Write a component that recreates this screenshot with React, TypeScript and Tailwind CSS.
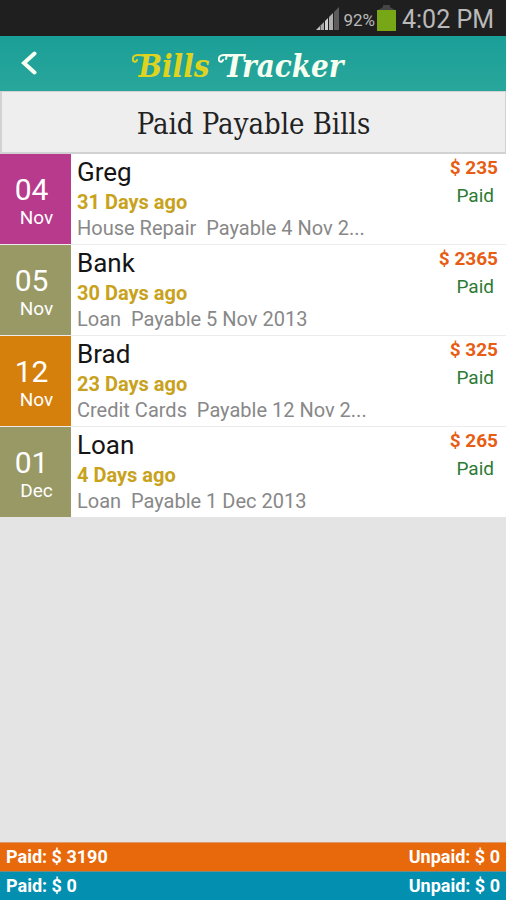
import clsx from 'clsx'

type Bill = {
  day: string
  month: string
  name: string
  age: string
  summary: string
  amount: string
  color: string
}

const bills: Bill[] = [
  { day: '04', month: 'Nov', name: 'Greg', age: '31 Days ago', summary: 'House Repair  Payable 4 Nov 2...', amount: '$ 235', color: 'bg-[#b83a8c]' },
  { day: '05', month: 'Nov', name: 'Bank', age: '30 Days ago', summary: 'Loan  Payable 5 Nov 2013', amount: '$ 2365', color: 'bg-[#999966]' },
  { day: '12', month: 'Nov', name: 'Brad', age: '23 Days ago', summary: 'Credit Cards  Payable 12 Nov 2...', amount: '$ 325', color: 'bg-[#d5800c]' },
  { day: '01', month: 'Dec', name: 'Loan', age: '4 Days ago', summary: 'Loan  Payable 1 Dec 2013', amount: '$ 265', color: 'bg-[#999966]' },
]

function StatusBar() {
  return (
    <div className="flex h-9 items-center justify-end bg-[#1f1f1f] pr-3 text-[#b9b9b9]">
      {/* Signal strength */}
      <svg width="23" height="23" viewBox="0 0 23 23" className="mr-1">
        <path d="M0 23 4 19V23Z" fill="#c4c4c4" />
        <path d="M4.500 23V18.500L8 15V23Z" fill="#a8a8a8" />
        <path d="M9 23V14L12 11V23Z" fill="#d0d0d0" />
        <path d="M13 23V10L17 6V23Z" fill="#b0b0b0" />
        <path d="M18 23V5L23 0V23Z" fill="#5c5c5c" />
      </svg>
      <span className="pt-1 text-[17px] leading-8">92%</span>
      {/* Battery */}
      <svg width="19" height="26" viewBox="0 0 19 26" className="mr-1.5 ml-0.5">
        <path d="M6 0H13V2L18 5H1L6 2Z" fill="#454545" />
        <rect y="5" width="19" height="21" fill="#77a617" />
      </svg>
      <span className="pt-1 text-[25px] leading-8">4:02 PM</span>
    </div>
  )
}

/* Small flourish that leads into a word of the logo */
function Flourish() {
  return (
    <svg width="14" height="11" viewBox="0 0 14 11" fill="none" stroke="currentColor" strokeWidth="2" strokeLinecap="round" className="absolute top-2 -left-1.5">
      <path d="M13 2C9 1 2 0 1 4C0 8 4 9 5 6" />
    </svg>
  )
}

function Header() {
  return (
    <header className="relative flex h-[55px] items-center justify-center bg-linear-to-b from-[#1a9f98] to-[#28a69b]">
      <button aria-label="Back" className="absolute top-0 left-0 flex h-full items-center px-5">
        <svg width="18" height="26" viewBox="0 0 18 26" fill="none" stroke="#f6fff0" strokeWidth="4">
          <path d="M14.500 2.500 4 12 14.500 21.500" strokeLinecap="round" />
        </svg>
      </button>
      <div className="flex items-center gap-3.5 pt-1 pr-6 font-['DejaVu_Serif_Condensed','DejaVu_Serif',serif] text-[31px] leading-10 font-bold italic">
        <span className="relative text-[#ded321]">
          <Flourish />
          Bills
        </span>
        <span className="relative text-[#f6fff0]">
          <Flourish />
          Tracker
        </span>
      </div>
    </header>
  )
}

function BillRow({ bill }: { bill: Bill }) {
  return (
    <li className="flex">
      <div className={clsx('flex h-[90px] w-[71px] shrink-0 flex-col pt-5 text-center text-white', bill.color)}>
        <span className="pr-2 text-[30px] leading-8">{bill.day}</span>
        <span className="pl-0.5 text-[19px] leading-6">{bill.month}</span>
      </div>
      <div className="min-w-0 pl-1.5">
        <h2 className="text-[26px] leading-9 text-[#151515]">{bill.name}</h2>
        <p className="text-xl leading-6 font-bold text-[#c8a21c]">{bill.age}</p>
        <p className="text-xl leading-7 whitespace-pre text-[#888]">{bill.summary}</p>
      </div>
      <div className="ml-auto flex flex-col pr-2 text-right text-[19px] leading-7">
        <span className="font-bold text-[#e85d14]">{bill.amount}</span>
        <span className="pr-1 text-[#2d7a35]">Paid</span>
      </div>
    </li>
  )
}

function TotalBar({ paid, unpaid, className }: { paid: string; unpaid: string; className: string }) {
  return (
    <div className={clsx('flex justify-between px-1.5 text-lg leading-7 font-bold text-white', className)}>
      <span>Paid: {paid}</span>
      <span>Unpaid: {unpaid}</span>
    </div>
  )
}

export default function App() {
  return (
    <div className="flex min-h-screen flex-col bg-[#e4e4e4] font-['Roboto',sans-serif]">
      <StatusBar />
      <Header />
      <h1 className="border border-b-2 border-l-2 border-[#d2d2d2] bg-[#eee] pt-1 text-center font-['DejaVu_Serif_Condensed','DejaVu_Serif',serif] text-[29px] leading-14 text-[#222]">
        Paid Payable Bills
      </h1>
      <ul className="divide-y divide-[#ececec] bg-white">
        {bills.map((bill) => (
          <BillRow key={bill.day} bill={bill} />
        ))}
      </ul>
      <footer className="mt-auto">
        <TotalBar paid="$ 3190" unpaid="$ 0" className="border-t border-[#e09a6a] bg-[#e8690b]" />
        <TotalBar paid="$ 0" unpaid="$ 0" className="border-t border-[#7a8a80] bg-[#028fb0]" />
      </footer>
    </div>
  )
}
